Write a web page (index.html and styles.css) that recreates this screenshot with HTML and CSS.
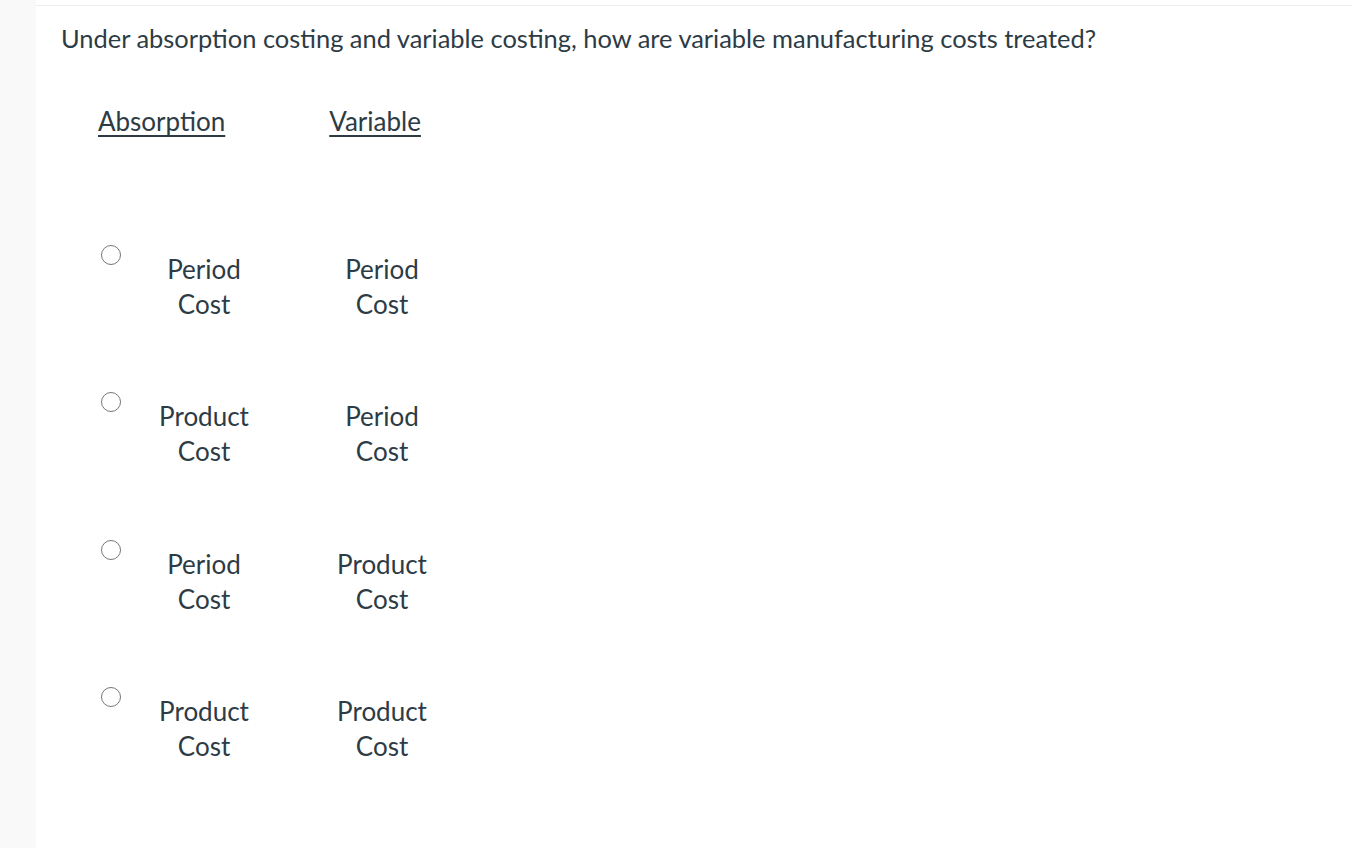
FILE: index.html
```html
<!DOCTYPE html>
<html>
<head>
<meta charset="utf-8">
<link rel="stylesheet" href="styles.css">
</head>
<body>
<div class="page">
  <div class="rail"></div>
  <div class="main">
    <div class="question">Under absorption costing and variable costing, how are variable manufacturing costs treated?</div>
    <div class="heads">
      <span class="head head-a">Absorption</span>
      <span class="head head-v">Variable</span>
    </div>
    <div class="options">
      <div class="option">
        <span class="radio"></span>
        <div class="cell cell-a">Period<br>Cost</div>
        <div class="cell cell-v">Period<br>Cost</div>
      </div>
      <div class="option">
        <span class="radio"></span>
        <div class="cell cell-a">Product<br>Cost</div>
        <div class="cell cell-v">Period<br>Cost</div>
      </div>
      <div class="option">
        <span class="radio"></span>
        <div class="cell cell-a">Period<br>Cost</div>
        <div class="cell cell-v">Product<br>Cost</div>
      </div>
      <div class="option">
        <span class="radio"></span>
        <div class="cell cell-a">Product<br>Cost</div>
        <div class="cell cell-v">Product<br>Cost</div>
      </div>
    </div>
  </div>
</div>
</body>
</html>
```
FILE: styles.css
```css
html, body {
  margin: 0;
  padding: 0;
  background: #ffffff;
}
body {
  font-family: Lato, "Open Sans", sans-serif;
  color: #2d3b45;
}
.page {
  display: flex;
  height: 848px;
  overflow: hidden;
}
.rail {
  width: 36px;
  flex: none;
  background: #f9f9f9;
}
.main {
  flex: 1;
  margin-top: 5px;
  border-top: 1px solid #ededed;
}
.question {
  font-size: 25.45px;
  line-height: 36px;
  padding: 14px 0 0 25px;
}
.heads {
  display: flex;
  padding: 47px 0 0 62px;
  font-size: 26px;
  line-height: 36px;
}
.head {
  text-decoration: underline;
  text-underline-offset: 4px;
  text-decoration-thickness: 2px;
}
.head-v {
  margin-left: 104px;
}
.options {
  padding: 113px 0 0 65px;
  display: flex;
  flex-direction: column;
  gap: 77.3px;
}
.option {
  display: flex;
  align-items: flex-start;
}
.radio {
  flex: none;
  box-sizing: border-box;
  width: 20px;
  height: 20px;
  border: 1.5px solid #767676;
  border-radius: 50%;
  margin-top: -7px;
}
.cell {
  flex: none;
  width: 120px;
  font-size: 26px;
  line-height: 35px;
  text-align: center;
}
.cell-a {
  margin-left: 23px;
}
.cell-v {
  margin-left: 58px;
}
```
